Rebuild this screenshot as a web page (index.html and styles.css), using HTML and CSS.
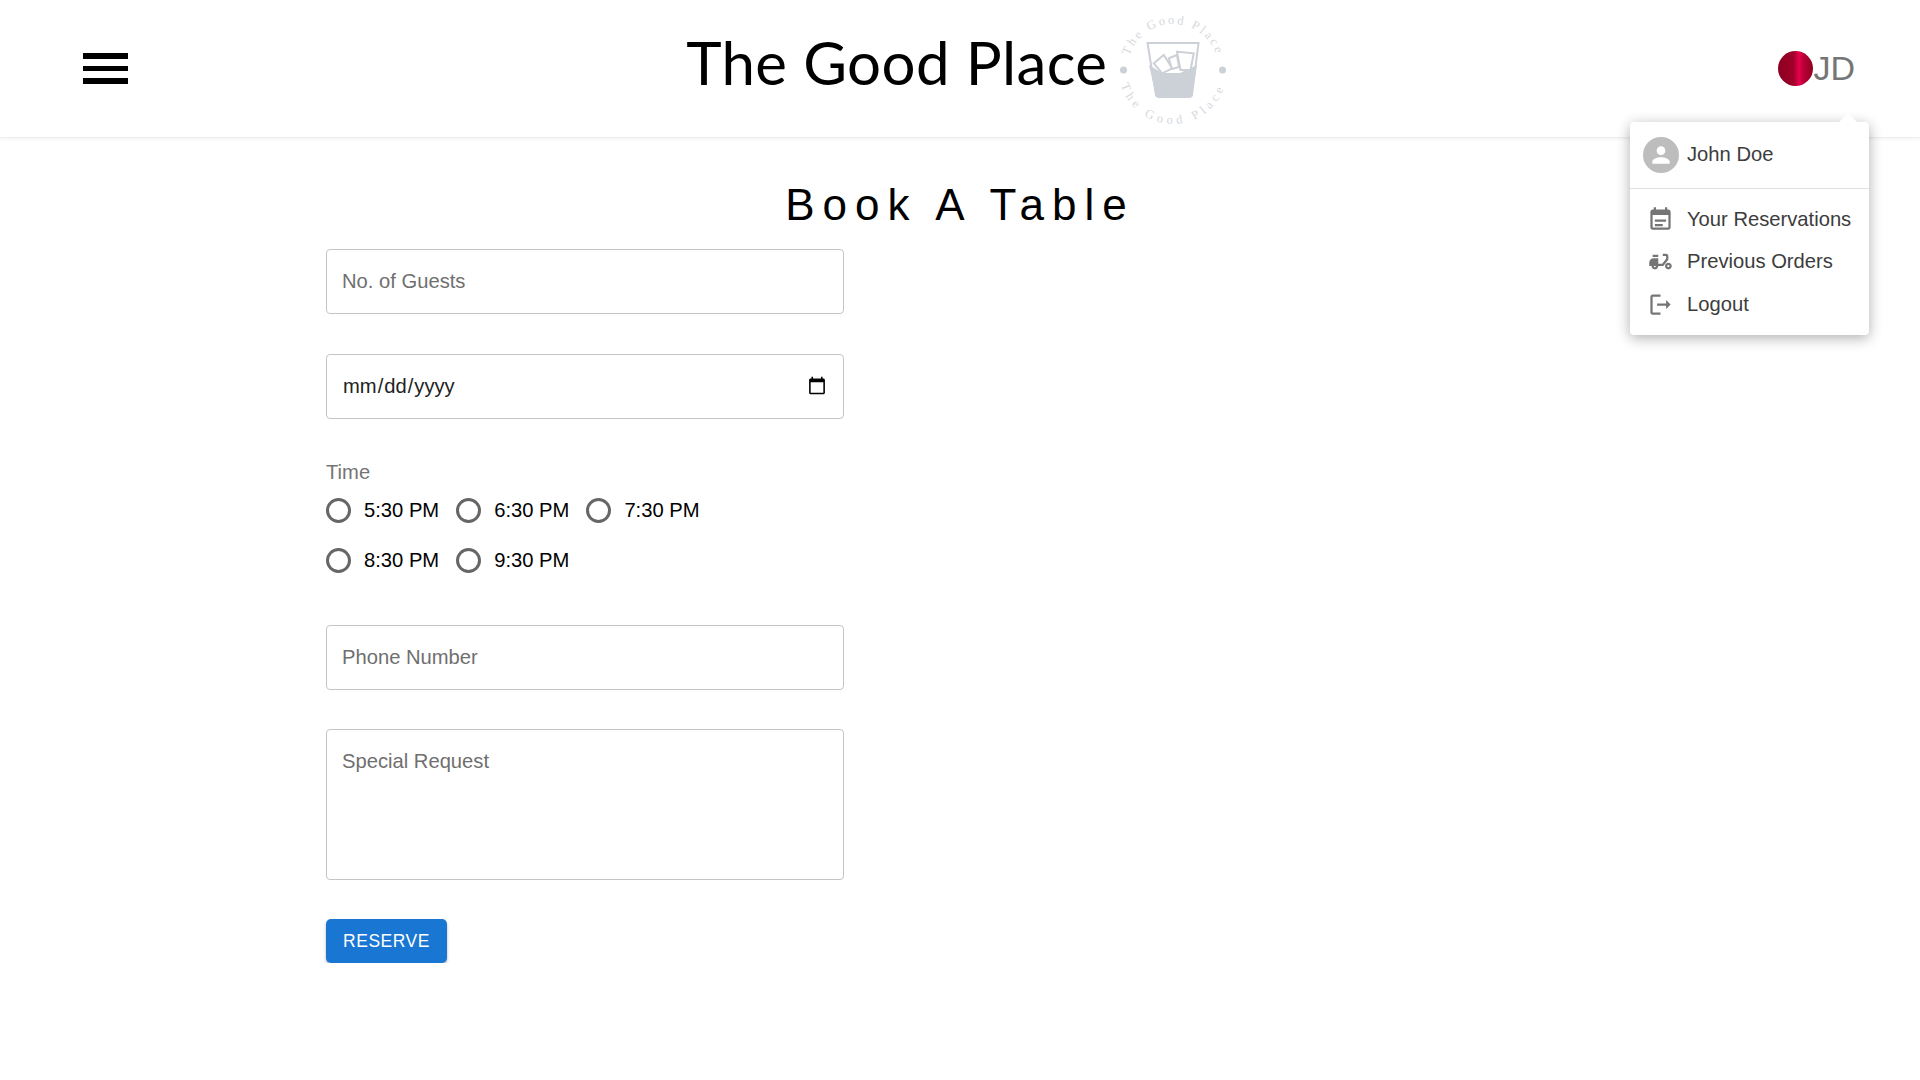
FILE: index.html
```html
<!DOCTYPE html>
<html lang="en">
    <head>
        <meta charset="UTF-8">
        <meta name="viewport" content="width=device-width, initial-scale=1.0">
        <title>The Good Place</title>
        <link rel="stylesheet" href="styles.css">
    </head>
    <body>
        <header class="topbar">
            <button class="burger" aria-label="menu"><span></span><span></span><span></span></button>
            <div class="brand">
                <span class="brand-name">The Good Place</span>
                <svg class="brand-logo" viewBox="-5 -5 120 120" width="120" height="120">
                    <defs>
                        <path id="arc-top" d="M9 55 A46 46 0 0 1 101 55"></path>
                        <path id="arc-bottom" d="M1 55 A54 54 0 0 0 109 55"></path>
                    </defs>
                    <text class="logo-text logo-text-top"><textPath href="#arc-top" startOffset="50%" text-anchor="middle">The Good Place</textPath></text>
                    <text class="logo-text logo-text-bottom"><textPath href="#arc-bottom" startOffset="50%" text-anchor="middle">The Good Place</textPath></text>
                    <circle cx="5.500" cy="55" r="3.500" fill="#ccd0d7"></circle>
                    <circle cx="104.500" cy="55" r="3.500" fill="#ccd0d7"></circle>
                    <path d="M29.500 28 H80.500 L74 80 Q73.500 82 71 82 H41 Q38.500 82 38 80 Z" fill="#fff" stroke="#ccd0d7" stroke-width="2"></path>
                    <path d="M31 50 L44 58 H62 L79 50 L74 80 Q73.500 82 71 82 H41 Q38.500 82 38 80 Z" fill="#ccd0d7"></path>
                    <path d="M35.800 48.300 L45.800 40 L54.200 53.300 L44.200 58.300 Z" fill="#fff" stroke="#ccd0d7" stroke-width="2"></path>
                    <path d="M50.800 43.300 L59 40 L61 52 L54 54 Z" fill="#fff" stroke="#ccd0d7" stroke-width="2"></path>
                    <path d="M59 36.700 L75.800 38.300 L72.500 55 L62.500 55 Z" fill="#fff" stroke="#ccd0d7" stroke-width="2"></path>
                </svg>
            </div>
            <div class="account">
                <span class="account-dot"></span>
                <span class="account-initials">JD</span>
            </div>
        </header>

        <div class="menu">
            <div class="menu-user">
                <span class="menu-avatar">
                    <svg viewBox="0 0 24 24" width="26" height="26"><path fill="#fff" d="M12 12c2.200 0 4-1.800 4-4s-1.800-4-4-4-4 1.800-4 4 1.800 4 4 4zm0 2c-2.700 0-8 1.300-8 4v2h16v-2c0-2.700-5.300-4-8-4z"></path></svg>
                </span>
                <span class="menu-name">John Doe</span>
            </div>
            <ul class="menu-list">
                <li>
                    <svg viewBox="0 0 24 24" width="27" height="27"><path fill="#757575" d="M17 12H7v2h10v-2zm2-9h-1V1h-2v2H8V1H6v2H5c-1.100 0-2 .9-2 2v14c0 1.100.9 2 2 2h14c1.100 0 2-.9 2-2V5c0-1.100-.9-2-2-2zm0 16H5V8h14v11zm-5-3H7v2h7v-2z"></path></svg>
                    Your Reservations
                </li>
                <li>
                    <svg viewBox="0 0 24 24" width="27" height="27"><path fill="#757575" d="M19 7c0-1.100-.9-2-2-2h-3v2h3v2.650L13.520 14H10V9H6c-2.210 0-4 1.790-4 4v3h2c0 1.660 1.340 3 3 3s3-1.340 3-3h4.480L19 10.350V7zM7 17c-.55 0-1-.45-1-1h2c0 .55-.45 1-1 1z"></path><path fill="#757575" d="M5 6h5v2H5zM19 13c-1.660 0-3 1.340-3 3s1.340 3 3 3 3-1.340 3-3-1.340-3-3-3zm0 4c-.55 0-1-.45-1-1s.45-1 1-1 1 .45 1 1-.45 1-1 1z"></path></svg>
                    Previous Orders
                </li>
                <li>
                    <svg viewBox="0 0 24 24" width="27" height="27"><path fill="#757575" d="M5 5h7V3H5c-1.100 0-2 .9-2 2v14c0 1.100.9 2 2 2h7v-2H5V5zm16 7-4-4v3H9v2h8v3l4-4z"></path></svg>
                    Logout
                </li>
            </ul>
        </div>

        <main class="page">
            <h1 class="page-title">Book A Table</h1>
            <form class="booking">
                <input class="field" type="text" placeholder="No. of Guests">
                <input class="field field-date" type="date">
                <div class="time">
                    <div class="time-label">Time</div>
                    <div class="time-options">
                        <label class="slot"><input type="radio" name="time">5:30 PM</label>
                        <label class="slot"><input type="radio" name="time">6:30 PM</label>
                        <label class="slot"><input type="radio" name="time">7:30 PM</label>
                        <label class="slot"><input type="radio" name="time">8:30 PM</label>
                        <label class="slot"><input type="radio" name="time">9:30 PM</label>
                    </div>
                </div>
                <input class="field" type="text" placeholder="Phone Number">
                <textarea class="field field-area" placeholder="Special Request"></textarea>
                <button class="reserve" type="button">RESERVE</button>
            </form>
        </main>
    </body>
</html>
```

FILE: styles.css
```css
* {
    box-sizing: border-box;
}
body {
    margin: 0;
    background: #fff;
    font-family: "Liberation Sans", Arial, sans-serif;
    color: #000;
}
.topbar {
    display: flex;
    align-items: center;
    justify-content: space-between;
    height: 138px;
    padding: 0 65px 0 83px;
    border-bottom: 1px solid #eee;
    box-shadow: 0 1px 3px rgba(0, 0, 0, 0.06);
}
.burger {
    display: flex;
    flex-direction: column;
    gap: 7px;
    width: 45px;
    padding: 0;
    border: 0;
    background: none;
}
.burger span {
    display: block;
    height: 5.500px;
    background: #000;
}
.brand {
    display: flex;
    align-items: center;
    gap: 6px;
    margin-left: 13px;
}
.brand-name {
    padding-bottom: 14px;
    font-family: Lato, sans-serif;
    font-size: 60px;
    letter-spacing: 0.400px;
    color: #000;
}
.brand-logo {
    margin-top: 2px;
}
.logo-text {
    font-family: "Liberation Serif", serif;
    font-size: 12.500px;
    fill: #d5d8dd;
}
.logo-text-top {
    letter-spacing: 2.500px;
}
.logo-text-bottom {
    letter-spacing: 4.200px;
}
.account {
    display: flex;
    align-items: center;
}
.account-dot {
    width: 35px;
    height: 35px;
    border-radius: 50%;
    background: linear-gradient(90deg, #8c001f 0%, #a0002a 45%, #ea0050 60%, #c00038 70%, #8c001f 100%);
}
.account-initials {
    font-size: 34px;
    color: #757575;
}
.menu {
    position: absolute;
    top: 122px;
    left: 1630px;
    width: 239px;
    height: 213px;
    background: #fff;
    border-radius: 4px;
    box-shadow: 0 3px 14px rgba(0, 0, 0, 0.32);
    color: #3c3c3c;
    font-size: 20.200px;
}
.menu::before {
    content: "";
    position: absolute;
    top: -6px;
    right: 14px;
    width: 14px;
    height: 14px;
    background: #fff;
    transform: rotate(45deg);
}
.menu-user {
    position: relative;
    display: flex;
    align-items: center;
    gap: 8px;
    height: 67px;
    padding: 0 0 0 13px;
    border-bottom: 1px solid #e0e0e0;
}
.menu-avatar {
    display: flex;
    align-items: center;
    justify-content: center;
    width: 36px;
    height: 36px;
    border-radius: 50%;
    background: #bdbdbd;
}
.menu-name {
    padding-bottom: 2px;
}
.menu-list {
    margin: 0;
    padding: 9px 0 0;
    list-style: none;
}
.menu-list li {
    display: flex;
    align-items: center;
    gap: 13px;
    height: 42.500px;
    padding-left: 17px;
}
.page {
    padding: 0 326px;
}
.page-title {
    margin: 0;
    padding: 40px 0 17px;
    width: 1268px;
    text-align: center;
    font-size: 44px;
    font-weight: 400;
    line-height: 54px;
    letter-spacing: 8px;
}
.booking {
    display: flex;
    flex-direction: column;
    align-items: flex-start;
    width: 518px;
}
.field {
    display: block;
    width: 100%;
    height: 65px;
    margin-bottom: 40px;
    padding: 0 15px;
    border: 1px solid #c4c4c4;
    border-radius: 4px;
    background: #fff;
    font-family: inherit;
    font-size: 20.200px;
    color: #222;
}
.field::placeholder {
    color: #6f6f6f;
    opacity: 1;
}
.field-date {
    padding-right: 14px;
}
.field-area {
    height: 151px;
    margin-top: -1px;
    margin-bottom: 39px;
    padding-top: 20px;
    resize: none;
}
.time {
    margin-top: 1px;
    margin-bottom: 49px;
}
.time-label {
    margin-bottom: 10px;
    font-size: 20.200px;
    line-height: 24px;
    color: #757575;
}
.time-options {
    display: grid;
    grid-template-columns: repeat(3, auto);
    justify-content: start;
    column-gap: 17px;
    row-gap: 18px;
}
.slot {
    display: flex;
    align-items: center;
    gap: 13px;
    height: 32px;
    font-size: 20.200px;
}
.slot input {
    appearance: none;
    width: 25px;
    height: 25px;
    margin: 0;
    border: 3px solid #666;
    border-radius: 50%;
}
.reserve {
    width: 121px;
    height: 44px;
    padding: 0;
    border: 0;
    border-radius: 5px;
    background: #1976d2;
    box-shadow: 0 2px 3px rgba(0, 0, 0, 0.3);
    font-family: inherit;
    font-size: 17.500px;
    letter-spacing: 0.500px;
    color: #fff;
}
```
